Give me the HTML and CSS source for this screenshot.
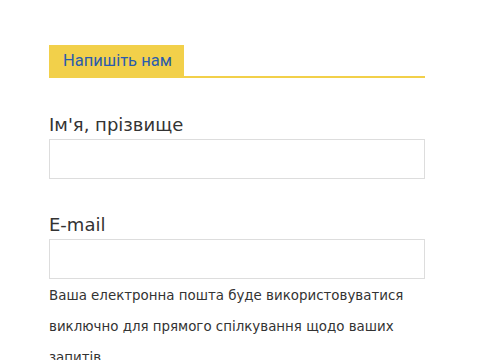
FILE: index.html
```html
<!DOCTYPE html>
<html lang="uk">

<head>
    <meta charset="UTF-8">
    <meta name="viewport" content="width=device-width, initial-scale=1.0">
    <title>Напишіть нам</title>
    <link rel="stylesheet" href="styles.css">
</head>

<body>
    <div class="container">
        <div class="tabs">
            <span class="tab">Напишіть нам</span>
        </div>

        <form class="contact-form">
            <div class="form-group">
                <label for="fullName">Ім'я, прізвище</label>
                <input type="text" id="fullName">
            </div>

            <div class="form-group">
                <label for="email">E-mail</label>
                <input type="text" id="email">
                <p class="hint">Ваша електронна пошта буде використовуватися<br>виключно для прямого спілкування щодо ваших<br>запитів</p>
            </div>
        </form>
    </div>
</body>

</html>
```

FILE: styles.css
```css
body {
    font-family: "DejaVu Sans", Verdana, sans-serif;
    background-color: #fff;
    color: #333;
    margin: 0;
    padding: 45px 0 0 49px;
}

.container {
    width: 376px;
}

.tabs {
    display: flex;
    border-bottom: 2px solid #f2d04a;
}

.tab {
    background: #f2d04a;
    color: #2b5cad;
    font-family: Roboto, Arial, sans-serif;
    font-size: 16.5px;
    line-height: 19px;
    padding: 6px 14px;
    width: 107px;
    white-space: nowrap;
}

.contact-form {
    margin-top: 36px;
}

.form-group {
    margin-bottom: 35px;
}

.form-group label {
    display: block;
    font-size: 18px;
    margin-bottom: 4px;
}

.form-group input[type="text"] {
    display: block;
    width: 100%;
    height: 40px;
    border: 1px solid #ddd;
    box-sizing: border-box;
    margin: 0;
}

.hint {
    font-size: 13.4px;
    line-height: 31px;
    margin: 1px 0 0;
    white-space: nowrap;
}
```
